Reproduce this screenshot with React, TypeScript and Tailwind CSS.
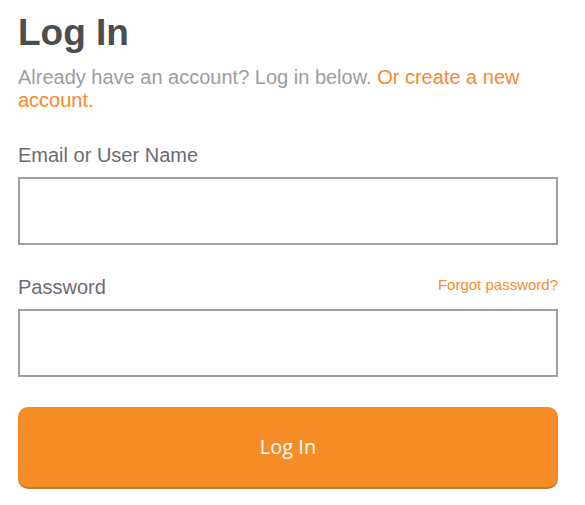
import React from "react";

const App = () => {
  return (
    <div className="min-h-screen bg-white px-[18px] pt-[10px] font-['Liberation_Sans',Arial,sans-serif]">
      {/* Header */}
      <h1 className="text-[37px] leading-[46px] font-bold text-[#4d4d4d]">Log In</h1>
      <p className="mt-[10px] w-[520px] text-[20px] leading-[23px] text-[#9d9d9d]">
        Already have an account? Log in below.{" "}
        <a href="#" className="text-[#f7892f]">
          Or create a new account.
        </a>
      </p>

      <form className="mt-[31px] flex flex-col" onSubmit={(e) => e.preventDefault()}>
        {/* Email */}
        <label className="text-[20px] leading-[24px] text-[#6d6a76]">Email or User Name</label>
        <input
          type="text"
          className="mt-[10px] h-[68px] w-[540px] border-2 border-[#a0a0a0] bg-white px-3 outline-none"
        />

        {/* Password */}
        <div className="mt-[30px] flex items-end justify-between w-[540px]">
          <label className="text-[20px] leading-[24px] text-[#6d6a76]">Password</label>
          <a href="#" className="mb-[5px] text-[15px] leading-[18px] text-[#f7892f]">
            Forgot password?
          </a>
        </div>
        <input
          type="password"
          className="mt-[10px] h-[68px] w-[540px] border-2 border-[#a0a0a0] bg-white px-3 outline-none"
        />

        <button
          type="submit"
          className="mt-[30px] h-[80px] w-[540px] rounded-[10px] bg-[#f68c25] text-[20px] text-white shadow-[0_2px_0_#c07e3a] font-['Open_Sans',sans-serif]"
        >
          Log In
        </button>
      </form>
    </div>
  );
};

export default App;
